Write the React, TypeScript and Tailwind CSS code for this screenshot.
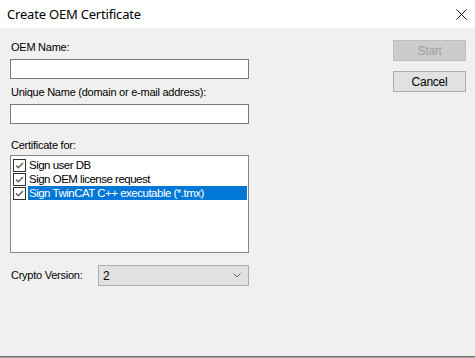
import React, { useState } from 'react'

const items = [
  'Sign user DB',
  'Sign OEM license request',
  'Sign TwinCAT C++ executable (*.tmx)',
]

function CheckBox() {
  return (
    <span className="flex h-[13px] w-[13px] shrink-0 items-center justify-center border border-[#333333] bg-white">
      <svg width="11" height="11" viewBox="0 0 11 11">
        <path d="M2 5.5 L4.3 7.8 L9 3" fill="none" stroke="#5f5f5f" strokeWidth="1.4" />
      </svg>
    </span>
  )
}

export default function App() {
  const [selected, setSelected] = useState(2)
  const font = { fontFamily: '"Liberation Sans", Arial, sans-serif' }

  return (
    <div className="flex h-[358px] w-[475px] flex-col bg-[#f0f0f0] text-[11px] tracking-[-0.25px] text-black" style={font}>
      {/* Title bar */}
      <div className="flex h-[28px] shrink-0 items-center justify-between bg-white pl-[7px] pr-[7px]">
        <span className="text-[13px] leading-none tracking-[-0.2px] text-black" style={{ fontFamily: '"Noto Sans", sans-serif' }}>
          Create OEM Certificate
        </span>
        <svg width="11" height="11" viewBox="0 0 11 11" className="mr-[1px]">
          <path d="M0.5 0.5 L10.5 10.5 M10.5 0.5 L0.5 10.5" stroke="#111" strokeWidth="1" />
        </svg>
      </div>

      {/* Body */}
      <div className="flex flex-1 justify-between pl-[10px] pr-[9px]">
        <div className="flex w-[239px] flex-col pt-[13px]">
          <label className="block h-[13px] pl-[1px] leading-[13px]">OEM Name:</label>
          <input className="mt-[5px] h-[20px] w-full border border-[#7a7a7a] bg-white px-1 outline-none" />

          <label className="mt-[7px] block h-[13px] pl-[1px] leading-[13px]">
            Unique Name (domain or e-mail address):
          </label>
          <input className="mt-[5px] h-[20px] w-full border border-[#7a7a7a] bg-white px-1 outline-none" />

          <label className="mt-[15px] block h-[13px] pl-[1px] leading-[13px]">Certificate for:</label>
          <div className="mt-[3px] h-[98px] w-full border border-[#828790] bg-white pt-[2px] pl-[2px] pr-[1px]">
            {items.map((item, i) => (
              <div
                key={item}
                onClick={() => setSelected(i)}
                className="flex h-[14px] items-center"
              >
                <CheckBox />
                <span
                  className={
                    'ml-[2px] flex h-[14px] flex-1 items-center pl-[1px] text-[11.5px] leading-[14px] tracking-[-0.5px] ' +
                    (selected === i ? 'bg-[#0078d7] text-white' : '')
                  }
                >
                  {item}
                </span>
              </div>
            ))}
          </div>

          <div className="mt-[12px] flex h-[21px] items-center">
            <span className="w-[88px] pl-[1px]">Crypto Version:</span>
            <div className="flex h-[21px] flex-1 items-center justify-between border border-[#adadad] bg-[#e1e1e1] pl-[4px] pr-[7px]">
              <span className="text-[12px]">2</span>
              <svg width="8" height="5" viewBox="0 0 8 5">
                <path d="M0.5 0.5 L4 4 L7.5 0.5" fill="none" stroke="#606060" strokeWidth="1" />
              </svg>
            </div>
          </div>
        </div>

        <div className="flex w-[73px] flex-col gap-[10px] pt-[12px]">
          <button className="h-[21px] w-full border border-[#bfbfbf] bg-[#cccccc] text-[12px] text-[#a0a0a0]" disabled>
            Start
          </button>
          <button className="h-[21px] w-full border border-[#adadad] bg-[#e1e1e1] text-[12px] text-black">
            Cancel
          </button>
        </div>
      </div>

      {/* Status strip */}
      <div className="h-[2px] shrink-0 border-t border-[#6f6f6f] bg-[#a8a8a8]" />
    </div>
  )
}
